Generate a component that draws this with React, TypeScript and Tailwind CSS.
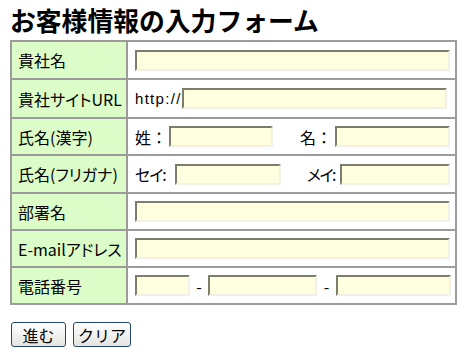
import React from "react";

const jp = "font-['Noto_Sans_CJK_JP','Noto_Sans',sans-serif]";

function Input({ w }: { w: string }) {
  return (
    <input
      type="text"
      className={`${w} shrink-0 h-[21px] bg-[#ffffdf] border-2 border-t-[#7d7d6d] border-l-[#7d7d6d] border-b-[#f1f1e9] border-r-[#f1f1e9] outline-none box-border`}
    />
  );
}

function Row({
  label,
  h,
  children,
  first,
}: {
  label: string;
  h: string;
  children: React.ReactNode;
  first?: boolean;
}) {
  return (
    <div className={`flex ${h} ${first ? "" : "border-t-2 border-[#9c9c9c]"}`}>
      <div className="w-[116px] shrink-0 bg-[#dcfdc8] border-r-2 border-[#9c9c9c] flex items-center pl-[6px] text-[16px] leading-none whitespace-nowrap [font-feature-settings:'palt']">
        {label}
      </div>
      <div className="flex-1 bg-white flex items-center pl-[7px] text-[16px] leading-none whitespace-nowrap">
        {children}
      </div>
    </div>
  );
}

export default function App() {
  return (
    <div className={`w-[466px] h-[355px] bg-white text-black ${jp}`}>
      <div className="h-[40px] flex items-center pl-[10px]">
        <h1 className="text-[25.8px] font-bold leading-none">お客様情報の入力フォーム</h1>
      </div>
      <div className="ml-[10px] w-[447px] border-2 border-[#9c9c9c] flex flex-col">
        <Row label="貴社名" h="h-[36px]" first>
          <Input w="w-[315px]" />
        </Row>
        <Row label="貴社サイトURL" h="h-[39px]">
          <span className="w-[47px] shrink-0 text-[15px] tracking-[1.3px] font-['Liberation_Sans',sans-serif]">http://</span>
          <Input w="w-[265px]" />
        </Row>
        <Row label="氏名(漢字)" h="h-[37px]">
          <span className="w-[34px] shrink-0">姓：</span>
          <Input w="w-[104px]" />
          <span className="ml-[27px] w-[35px] shrink-0">名：</span>
          <Input w="w-[115px]" />
        </Row>
        <Row label="氏名(フリガナ)" h="h-[38px]">
          <span className="w-[40px] shrink-0 tracking-[-1px] [font-feature-settings:'palt']">セイ:</span>
          <Input w="w-[106px]" />
          <span className="ml-[26px] w-[33px] shrink-0 tracking-[-1.5px] [font-feature-settings:'palt']">メイ:</span>
          <Input w="w-[110px]" />
        </Row>
        <Row label="部署名" h="h-[37px]">
          <Input w="w-[315px]" />
        </Row>
        <Row label="E-mailアドレス" h="h-[37px]">
          <Input w="w-[315px]" />
        </Row>
        <Row label="電話番号" h="h-[37px]">
          <Input w="w-[55px]" />
          <span className="w-[18px] shrink-0 text-center">-</span>
          <Input w="w-[109px]" />
          <span className="w-[19px] shrink-0 text-center">-</span>
          <Input w="w-[115px]" />
        </Row>
      </div>
      <div className="flex gap-[7px] pl-[11px] mt-[17px]">
        <button className="w-[55px] h-[25px] rounded-[3px] border border-[#24466f] bg-gradient-to-b from-[#ffffff] to-[#e4e4e0] text-[16px] leading-none flex items-center justify-center">
          進む
        </button>
        <button className="w-[58px] h-[25px] rounded-[3px] border border-[#24466f] bg-gradient-to-b from-[#ffffff] to-[#e4e4e0] text-[16px] leading-none flex items-center justify-center">
          クリア
        </button>
      </div>
    </div>
  );
}
